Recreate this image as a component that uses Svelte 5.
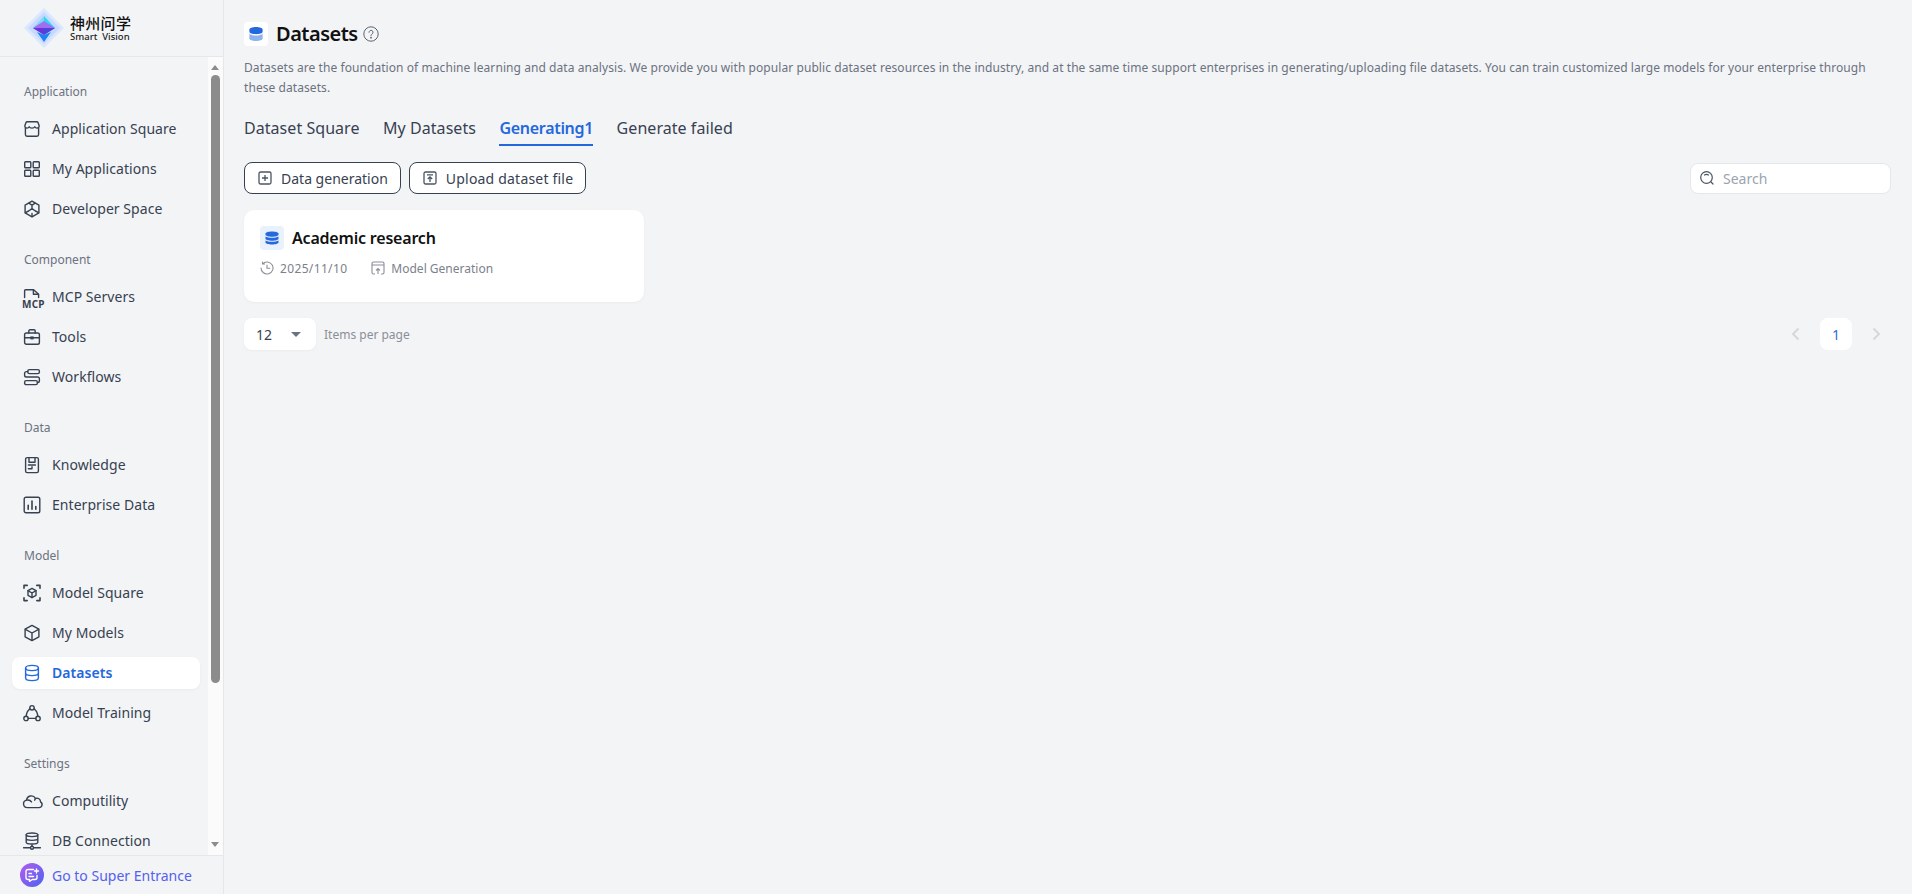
<script lang="ts">
  // sidebar menu data, icons are looked up by key in the markup below
  const menu = [
    { title: 'Application', items: [
      { label: 'Application Square', icon: 'store' },
      { label: 'My Applications', icon: 'grid' },
      { label: 'Developer Space', icon: 'hex' },
    ] },
    { title: 'Component', items: [
      { label: 'MCP Servers', icon: 'mcp' },
      { label: 'Tools', icon: 'tools' },
      { label: 'Workflows', icon: 'flow' },
    ] },
    { title: 'Data', items: [
      { label: 'Knowledge', icon: 'book' },
      { label: 'Enterprise Data', icon: 'chart' },
    ] },
    { title: 'Model', items: [
      { label: 'Model Square', icon: 'scan' },
      { label: 'My Models', icon: 'cube' },
      { label: 'Datasets', icon: 'db', active: true },
      { label: 'Model Training', icon: 'train' },
    ] },
    { title: 'Settings', items: [
      { label: 'Computility', icon: 'cloud' },
      { label: 'DB Connection', icon: 'dbconn' },
    ] },
  ]

  const tabs = ['Dataset Square', 'My Datasets', 'Generating1', 'Generate failed']
  let activeTab = $state(2)
  let pageSize = $state(12)
</script>

<div class="app">
  <aside class="sidebar">
    <div class="logo">
      <svg width="40" height="40" viewBox="0 0 40 40">
        <polygon points="20,0 40,20 20,40 0,20" fill="#dbe7fe" />
        <polygon points="20,4 36,20 20,36 4,20" fill="#c6dafd" />
        <polygon points="20,8 31,20 20,20" fill="#2fd6f4" />
        <polygon points="9,20 20,8 20,20" fill="#7fd8f8" />
        <polygon points="9,20 20,13 31,20 20,27" fill="#a06ff0" />
        <polygon points="9,20 20,20 20,27" fill="#6a35d8" />
        <polygon points="20,20 31,20 20,27" fill="#4a46d8" />
        <polygon points="13,24 20,27 27,24 20,34" fill="#1e84f2" />
      </svg>
      <div class="logo-text">
        <div class="logo-cn">神州问学</div>
        <div class="logo-en">Smart&nbsp; Vision</div>
      </div>
    </div>

    <div class="menu-wrap">
      <nav class="menu">
        {#each menu as group}
          <div class="group">
            <div class="group-title">{group.title}</div>
            {#each group.items as item}
              <div class="item" class:active={item.active}>
                <svg class="icon" width="18" height="18" viewBox="0 0 18 18" fill="none" stroke="currentColor" stroke-width="1.4" stroke-linejoin="round" stroke-linecap="round">
                  {#if item.icon === 'store'}
                    <path d="M4.2 1.800h9.600a1.400 1.400 0 0 1 1.300.9l1 2.800c.4 1.400-.7 2.600-2.100 2.600-1 0-1.800-.5-2.200-1.300-.4.8-1.300 1.300-2.800 1.300s-2.400-.5-2.800-1.300c-.4.8-1.200 1.300-2.200 1.300-1.400 0-2.500-1.200-2.100-2.600l1-2.800a1.400 1.400 0 0 1 1.300-.9z" />
                    <path d="M2.400 8v6.600a1.600 1.600 0 0 0 1.600 1.600h10a1.600 1.600 0 0 0 1.600-1.600V8" />
                  {:else if item.icon === 'grid'}
                    <rect x="1.700" y="1.700" width="6.100" height="6.100" rx=".8" />
                    <rect x="10.200" y="1.700" width="6.100" height="6.100" rx=".8" />
                    <rect x="1.700" y="10.200" width="6.100" height="6.100" rx=".8" />
                    <rect x="10.200" y="10.200" width="6.100" height="6.100" rx=".8" />
                  {:else if item.icon === 'hex'}
                    <path d="M9 1.200l6.900 3.900v7.800L9 16.800l-6.900-3.900V5.100z" />
                    <path d="M9 5.200v3.400M9 8.600l-3.400 2.400M9 8.600l3.400 2.400M5.800 3.200L9 5.200l3.200-2M2.400 12.600l3.200-1.600M15.600 12.600l-3.200-1.600M9 16.500v-3" />
                  {:else if item.icon === 'mcp'}
                    <path d="M1.600 9.500V2.800a1 1 0 0 1 1-1h8l5 4.400v3.300" />
                    <path d="M10.400 2v4.300h5" />
                  {:else if item.icon === 'tools'}
                    <rect x="1.600" y="5" width="14.800" height="11.200" rx="1.800" />
                    <path d="M5.800 5V3a1.200 1.200 0 0 1 1.200-1.200h4A1.200 1.200 0 0 1 12.200 3v2M1.800 9.800h14.400" />
                    <rect x="7.400" y="8.400" width="3.200" height="3" fill="currentColor" stroke="none" />
                  {:else if item.icon === 'flow'}
                    <rect x="4.800" y="1.600" width="11.600" height="4" rx="1.600" />
                    <rect x="1.600" y="12.600" width="12.800" height="4" rx="1.600" />
                    <path d="M4.800 3.600H3.400a1.800 1.800 0 0 0-1.800 1.800v1.800A1.800 1.800 0 0 0 3.400 9h11.200a1.800 1.800 0 0 1 1.800 1.800v2a1.800 1.800 0 0 1-1.800 1.800h-.2" />
                  {:else if item.icon === 'book'}
                    <rect x="2.600" y="1.600" width="12.800" height="15" rx="1.600" />
                    <path d="M6 1.800v4.400h6V1.800M5.400 9h7M5.400 12.800h3.600v-2" />
                  {:else if item.icon === 'chart'}
                    <rect x="1.200" y="1.200" width="15.600" height="15.600" rx="1.800" />
                    <path d="M5.200 9.200v4M9 5v8.200M12.800 10.600v2.600" stroke-width="1.600" />
                  {:else if item.icon === 'scan'}
                    <path d="M1 4.200V1.400h3.200M13.800 1.400H17v2.800M1 13.800v2.800h3.200M13.800 16.600H17v-2.800" stroke-width="1.600" />
                    <path d="M9 4.400l4 2.300v4.600l-4 2.300-4-2.300V6.700z" />
                    <path d="M5 6.700L9 9l4-2.300M9 9v4.600" />
                  {:else if item.icon === 'cube'}
                    <path d="M9 1.400l6.900 3.800v7.600L9 16.600l-6.900-3.800V5.200z" />
                    <path d="M2.400 5.400L9 9l6.600-3.600M9 9v7.400" />
                  {:else if item.icon === 'db'}
                    <ellipse cx="9" cy="4" rx="6.400" ry="2.600" />
                    <path d="M2.600 4v10c0 1.500 2.900 2.600 6.400 2.600s6.400-1.100 6.400-2.600V4M2.600 9c0 1.500 2.900 2.600 6.400 2.600s6.400-1.100 6.400-2.600" />
                  {:else if item.icon === 'train'}
                    <circle cx="9" cy="3.800" r="2.200" />
                    <circle cx="3" cy="14.400" r="2.200" />
                    <circle cx="15" cy="14.400" r="2.200" />
                    <path d="M5.200 14.400h7.600M7 4.800C4.800 6.200 3.400 9 3.300 12.200M11 4.800c2.200 1.400 3.600 4.200 3.700 7.400" />
                  {:else if item.icon === 'cloud'}
                    <path d="M4.300 15.600a3.800 3.800 0 0 1-.8-7.500 4.800 4.800 0 0 1 9-1.600 3.500 3.500 0 0 1 5 3.300 3.100 3.100 0 0 1-1.600 5.800z" />
                    <path d="M3.500 8.100c1.800-.4 4 .2 5 1.800M12.500 6.500c-.4.500-.7 1-.8 1.700" />
                  {:else if item.icon === 'dbconn'}
                    <ellipse cx="9" cy="2.800" rx="5.800" ry="1.800" />
                    <path d="M3.200 2.800v7.400c0 1 2.600 1.800 5.800 1.800s5.800-.8 5.800-1.800V2.800M3.200 6.600c0 1 2.600 1.800 5.800 1.800s5.800-.8 5.800-1.800M9 12v2.200M.6 15.800h6.600M10.800 15.800h6.600" />
                    <circle cx="9" cy="15.800" r="1.500" />
                  {/if}
                </svg>
                {#if item.icon === 'mcp'}<span class="mcp-tag">MCP</span>{/if}
                <span class="label">{item.label}</span>
              </div>
            {/each}
          </div>
        {/each}
      </nav>
      <div class="scrollbar">
        <span class="arrow up"></span>
        <div class="thumb"></div>
        <span class="arrow down"></span>
      </div>
    </div>

    <div class="super">
      <span class="super-icon">
        <svg width="16" height="16" viewBox="0 0 16 16" fill="none" stroke="#fff" stroke-width="1.400" stroke-linecap="round" stroke-linejoin="round">
          <path d="M9.500 2.500H4a2 2 0 0 0-2 2v6a2 2 0 0 0 2 2h1.500v1.800l2.800-1.800H11a2 2 0 0 0 2-2V8.500" />
          <path d="M5 6.500h2.500M5 9.500h4.500M12.500 2v4M10.500 4h4" />
        </svg>
      </span>
      <span class="super-text">Go to Super Entrance</span>
    </div>
  </aside>

  <main class="content">
    <header class="title-row">
      <span class="title-icon">
        <svg width="16" height="16" viewBox="0 0 16 16">
          <path d="M8 1c3.600 0 6.600 1 6.600 2.400v2.400C14.600 7.200 11.600 8.200 8 8.200S1.400 7.200 1.400 5.800V3.400C1.400 2 4.400 1 8 1z" fill="#2468dd" />
          <path d="M1.400 7.600C2.400 9 5 9.600 8 9.600s5.600-.6 6.600-2v5.200C14.600 14 11.600 15 8 15s-6.600-1-6.600-2.200z" fill="#8db2ee" />
        </svg>
      </span>
      <h1>Datasets</h1>
      <svg class="help" width="16" height="16" viewBox="0 0 16 16" fill="none" stroke="#5b6472" stroke-width="1">
        <circle cx="8" cy="8" r="7.200" />
        <path d="M6 6.300a2 2 0 1 1 3.200 1.600c-.8.500-1.200.9-1.200 1.800" stroke-linecap="round" />
        <circle cx="8" cy="11.700" r=".5" fill="#5b6472" />
      </svg>
    </header>
    <p class="desc">Datasets are the foundation of machine learning and data analysis. We provide you with popular public dataset resources in the industry, and at the same time support enterprises in generating/uploading file datasets. You can train customized large models for your enterprise through these datasets.</p>

    <div class="tabs">
      {#each tabs as tab, i}
        <button class="tab" class:active={activeTab === i} onclick={() => activeTab = i}>{tab}</button>
      {/each}
    </div>

    <div class="toolbar">
      <button class="btn">
        <svg width="14" height="14" viewBox="0 0 14 14" fill="none" stroke="#4b5563" stroke-width="1.300">
          <rect x="1" y="1" width="12" height="12" rx="1.500" />
          <path d="M7 4v6M4 7h6" />
        </svg>
        Data generation
      </button>
      <button class="btn wide">
        <svg width="14" height="14" viewBox="0 0 14 14" fill="none" stroke="#4b5563" stroke-width="1.300">
          <rect x="1" y="1" width="12" height="12" rx="1.500" />
          <path d="M4 3.800h6M7 11V6M4.800 8L7 5.800 9.200 8" />
        </svg>
        Upload dataset file
      </button>
      <label class="search">
        <svg width="16" height="16" viewBox="0 0 16 16" fill="none" stroke="#4b5563" stroke-width="1.200" stroke-linecap="round">
          <circle cx="7.500" cy="7.500" r="5.800" />
          <path d="M5.500 5c1.200-.8 2.800-.8 4 0M12 12l2 2" />
        </svg>
        <input placeholder="Search" />
      </label>
    </div>

    <section class="card">
      <div class="card-head">
        <span class="card-icon">
          <svg width="16" height="16" viewBox="0 0 16 16" fill="#2468dd">
            <path d="M8 1.500c3.400 0 6.500.9 6.500 2v1.200c0 1.100-3.100 2-6.500 2s-6.500-.9-6.500-2V3.500c0-1.100 3.100-2 6.500-2z" />
            <path d="M1.500 6.500c1.200 1 3.800 1.300 6.500 1.300s5.300-.3 6.500-1.300v2.200c0 1.100-3.100 2-6.500 2s-6.500-.9-6.500-2z" />
            <path d="M1.500 10.500c1.200 1 3.800 1.300 6.500 1.300s5.300-.3 6.500-1.300v2c0 1.100-3.100 2-6.500 2s-6.500-.9-6.500-2z" />
          </svg>
        </span>
        <span class="card-title">Academic research</span>
      </div>
      <div class="card-meta">
        <svg width="14" height="14" viewBox="0 0 14 14" fill="none" stroke="#8a8f98" stroke-width="1.100" stroke-linecap="round">
          <path d="M2.500 3A6 6 0 1 1 1 7M2.500 1v2h2M7 4v3.300h2.800" />
        </svg>
        <span class="date">2025/11/10</span>
        <svg class="gen" width="14" height="14" viewBox="0 0 14 14" fill="none" stroke="#8a8f98" stroke-width="1.100">
          <path d="M4 13H2.500A1.500 1.500 0 0 1 1 11.500v-9A1.500 1.500 0 0 1 2.500 1h9A1.500 1.500 0 0 1 13 2.500v9a1.500 1.500 0 0 1-1.500 1.500H10M1 4h12M7 13V7.500M5 9.500l2-2 2 2" />
        </svg>
        <span class="source">Model Generation</span>
      </div>
    </section>

    <div class="pager">
      <div class="size-select">
        <span>{pageSize}</span>
        <span class="caret"></span>
      </div>
      <span class="per-page">Items per page</span>
      <div class="pages">
        <svg width="14" height="14" viewBox="0 0 14 14" fill="none" stroke="#d4d6da" stroke-width="1.800"><path d="M9.500 1.500L4 7l5.500 5.500" /></svg>
        <span class="page">1</span>
        <svg width="14" height="14" viewBox="0 0 14 14" fill="none" stroke="#d4d6da" stroke-width="1.800"><path d="M4.500 1.500L10 7l-5.500 5.500" /></svg>
      </div>
    </div>
  </main>
</div>

<style>
  :global(body) { margin: 0; background: #f3f4f6; }
  .app {
    display: flex; height: 894px; overflow: hidden; background: #f3f4f6;
    font-family: "Noto Sans", "Noto Sans CJK SC", sans-serif; color: #374151;
  }

  .sidebar { width: 223px; flex: none; display: flex; flex-direction: column; border-right: 1px solid #e5e7eb; }
  .logo { height: 56px; flex: none; display: flex; align-items: center; gap: 6px; padding-left: 24px; border-bottom: 1px solid #e5e7eb; }
  .logo-cn { font-size: 15px; line-height: 16px; font-weight: 500; color: #111; letter-spacing: 0.3px; }
  .logo-en { font-size: 9.500px; line-height: 11px; font-weight: 500; color: #222; }

  .menu-wrap { flex: 1; display: flex; min-height: 0; }
  .menu { flex: 1; min-width: 0; overflow: hidden; padding: 0 8px 0 12px; }
  .group { padding-top: 27px; }
  .group-title { font-size: 12px; line-height: 16px; color: #6b7280; padding-left: 12px; margin-bottom: 13px; }
  .item {
    position: relative; display: flex; align-items: center; gap: 11px; height: 32px; margin-bottom: 8px;
    padding-left: 11px; border-radius: 8px; font-size: 14px; letter-spacing: 0.05px;
  }
  .item:last-child { margin-bottom: 0; }
  .item.active { background: #fff; color: #2468dd; font-weight: 600; box-shadow: 0 1px 3px rgba(0, 0, 0, 0.04); }
  .label { margin-top: -2px; }
  .icon { flex: none; overflow: visible; }
  .mcp-tag {
    position: absolute; left: 9px; top: 18px; font-size: 10px; line-height: 10px; font-weight: 700; letter-spacing: 0.2px;
    background: #f3f4f6; padding: 0 1px;
  }

  .scrollbar { width: 15px; flex: none; background: #fbfbfb; position: relative; }
  .thumb { position: absolute; top: 18px; left: 3px; width: 9px; height: 608px; border-radius: 5px; background: #8c8c8c; }
  .arrow { position: absolute; left: 3px; width: 0; height: 0; border-left: 4.500px solid transparent; border-right: 4.500px solid transparent; }
  .arrow.up { top: 8px; border-bottom: 5px solid #8c8c8c; }
  .arrow.down { bottom: 8px; border-top: 5px solid #8c8c8c; }

  .super { height: 38px; flex: none; display: flex; align-items: center; gap: 8px; padding-left: 20px; border-top: 1px solid #e5e7eb; }
  .super-icon {
    width: 24px; height: 24px; border-radius: 50%; display: flex; align-items: center; justify-content: center;
    background: linear-gradient(135deg, #b45cf0, #4a63f0);
  }
  .super-text { font-size: 14px; color: #5560ee; }

  .content { flex: 1; min-width: 0; padding: 22px 21px 0 20px; }
  .title-row { display: flex; align-items: center; height: 24px; }
  .title-icon { width: 24px; height: 24px; border-radius: 4px; background: #fff; display: flex; align-items: center; justify-content: center; }
  h1 { margin: 0 0 0 8px; font-size: 20px; font-weight: 600; color: #111; line-height: 24px; letter-spacing: -0.5px; }
  .help { margin-left: 5px; }
  .desc { margin: 12px 0 0; font-size: 12px; line-height: 20px; color: #6b7280; letter-spacing: 0.07px; }

  .tabs { display: flex; gap: 23.5px; margin-top: 18px; }
  .tab {
    border: 0; background: none; padding: 0 0 4px; font: inherit; font-size: 16px; line-height: 24px; color: #374151;
    border-bottom: 2px solid transparent; cursor: pointer; letter-spacing: 0.05px;
  }
  .tab.active { color: #2468dd; font-weight: 600; letter-spacing: -0.3px; border-bottom-color: #2468dd; }

  .toolbar { display: flex; align-items: center; gap: 8px; margin-top: 16px; }
  .btn {
    display: flex; align-items: center; gap: 9px; height: 32px; padding: 0 12px 0 13px; box-sizing: border-box;
    border: 1px solid #374151; border-radius: 8px; background: #fff; font: inherit; font-size: 14px; color: #374151;
  }
  .btn.wide { letter-spacing: 0.2px; }
  .search {
    margin-left: auto; width: 201px; height: 31px; box-sizing: border-box; display: flex; align-items: center; gap: 6px;
    padding-left: 8px; background: #fff; border: 1px solid #e5e7eb; border-radius: 8px;
  }
  .search input { border: 0; outline: 0; flex: 1; min-width: 0; background: none; font: inherit; font-size: 14px; }
  .search input::placeholder { color: #9ca3af; }

  .card {
    width: 400px; height: 92px; margin-top: 16px; box-sizing: border-box; padding: 16px;
    background: #fff; border-radius: 10px; box-shadow: 0 1px 3px rgba(0, 0, 0, 0.04);
  }
  .card-head { display: flex; align-items: center; gap: 8px; }
  .card-icon { width: 24px; height: 24px; border-radius: 4px; background: #e9f1fd; display: flex; align-items: center; justify-content: center; }
  .card-title { font-size: 16px; font-weight: 600; color: #111; letter-spacing: -0.2px; }
  .card-meta { display: flex; align-items: center; gap: 5px; margin-top: 8px; font-size: 12px; color: #7b818c; height: 20px; }
  .date { letter-spacing: 0.35px; margin-left: 1px; }
  .gen { margin-left: 19px; }
  .source { margin-left: 1px; }

  .pager { display: flex; align-items: center; margin-top: 16px; }
  .size-select {
    width: 72px; height: 32px; box-sizing: border-box; display: flex; align-items: center; justify-content: space-between;
    padding: 0 15px 0 12px; background: #fff; border-radius: 8px; font-size: 14px; box-shadow: 0 1px 3px rgba(0, 0, 0, 0.04);
  }
  .caret { width: 0; height: 0; border-left: 5px solid transparent; border-right: 5px solid transparent; border-top: 5px solid #6b7280; }
  .per-page { margin-left: 8px; font-size: 12px; color: #8a8f98; }
  .pages { margin-left: auto; margin-right: 8px; display: flex; align-items: center; gap: 17px; }
  .page {
    width: 32px; height: 32px; border-radius: 8px; background: #fff; color: #2f6be8; font-size: 14px;
    display: flex; align-items: center; justify-content: center;
  }
</style>
